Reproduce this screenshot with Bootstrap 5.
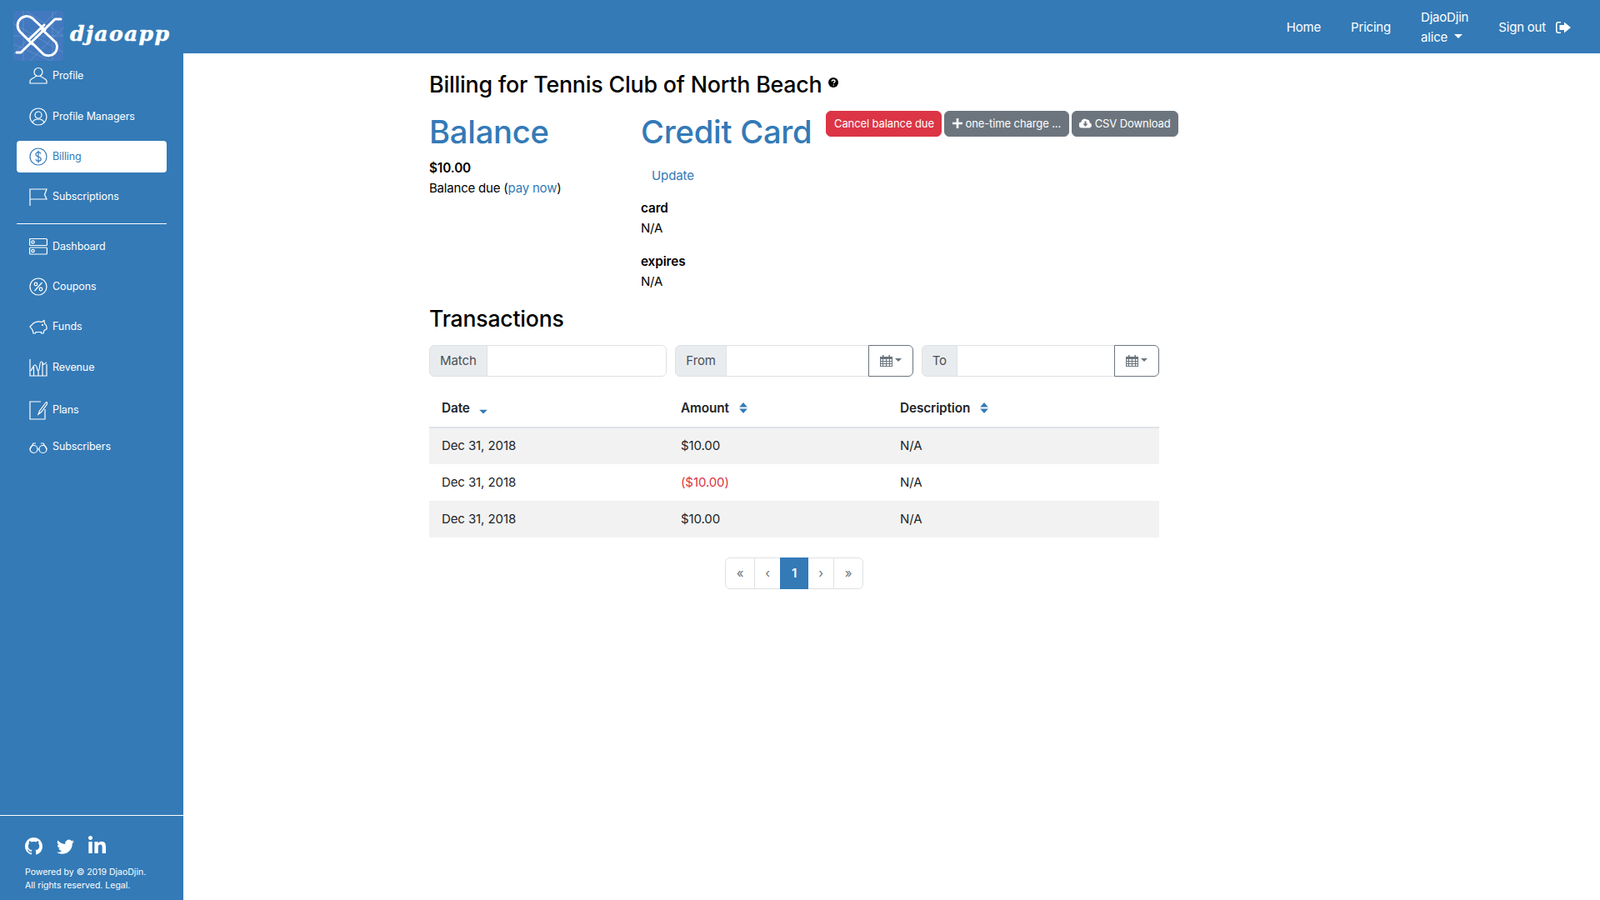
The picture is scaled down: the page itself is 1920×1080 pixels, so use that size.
<!DOCTYPE html>
<html lang="en">
<head>
<meta charset="utf-8">
<title>Billing</title>
<link href="https://cdn.jsdelivr.net/npm/bootstrap@5.3.0/dist/css/bootstrap.min.css" rel="stylesheet">
<style>
:root{--brand:#337ab7;}
html,body{height:100%;}
body{font-family:Inter,"Liberation Sans",sans-serif;font-size:15px;color:#000;overflow:hidden;letter-spacing:-.1px;}
a{color:var(--brand);text-decoration:none;}
.topbar{height:64px;background:var(--brand);padding:0;position:relative;z-index:5;align-items:flex-start;}
.logo-wrap{margin:13px 0 0 16px;gap:8px;}
.logo-box{width:60px;height:60px;border-radius:4px;background:#4279be;}
.logo-word{font-family:"DejaVu Serif",serif;font-weight:700;font-style:italic;font-size:25px;color:#fff;letter-spacing:1.4px;margin-top:-5px;-webkit-text-stroke:.5px #fff;}
.top-links{height:64px;align-items:center;gap:36px;padding:2px 34px 0 0;font-size:15px;letter-spacing:-.2px;}
.top-links a{color:#fff;line-height:24px;display:block;}
.top-links .toplink-two{line-height:24px;}
.top-links .dropdown-toggle::after{margin-left:.55em;border-top-width:.35em;border-left-width:.35em;border-right-width:.35em;}
.signout-gap{gap:11px;}
.shell{height:calc(100% - 64px);}
.side{width:220px;background:var(--brand);color:#fff;flex:none;}
.side-list{padding:8px 20px 0;display:flex;flex-direction:column;}
.side-link{height:38px;display:flex;align-items:center;gap:6px;padding-left:15px;color:#fff;font-size:12.5px;border-radius:4px;margin-bottom:10px;}
.side-link svg{width:22px;height:24px;flex:none;fill:none;stroke:currentColor;stroke-width:1.2;}
.side-link.on{background:#fff;color:var(--brand);}
.nudge-a{margin-top:1px;}
.nudge-b{margin-top:3px;}
.nudge-d{margin-top:-4px;}
.side-rule{border-top:1px solid #fff;margin:3px 0 8px;opacity:1;}
.side-foot{border-top:1px solid #fff;padding:24px 0 0 30px;height:102px;font-size:10.5px;line-height:16px;letter-spacing:0;}
.foot-icons{gap:17px;margin-bottom:12px;height:24px;align-items:center;}
.foot-icons svg{fill:#fff;display:block;}
.page-area{padding:0 0 0 295px;flex:1;min-width:0;}
.page-inner{width:876px;}
.billing-title{font-size:26.8px;font-weight:500;line-height:32px;margin:21px 0 0;letter-spacing:-.2px;}
.help-dot{width:12px;height:12px;margin-left:1px;vertical-align:6px;}
.head-row{margin-top:8px;position:relative;}
.col-balance{width:254px;flex:none;}
.col-card{flex:none;}
.blue-head{color:var(--brand);font-size:38.2px;font-weight:500;line-height:48px;margin:9px 0 0;letter-spacing:-.25px;}
.fact-label{font-weight:600;line-height:24px;font-size:15.3px;}
.fact-value{line-height:24px;letter-spacing:-.2px;}
.balance-body{margin-top:8px;}
.update-link{display:block;margin:17px 0 0 13px;line-height:24px;}
.card-facts{margin-top:15px;}
.card-facts .fact-gap{margin-top:16px;}
.action-row{gap:3px;margin:8px 0 0 17px;height:31px;white-space:nowrap;}
.action-row .btn{font-size:13px;padding:0 8.5px;height:31px;line-height:29px;letter-spacing:-.1px;}
.action-row svg{fill:#fff;vertical-align:-1px;}
.trans-head{font-size:26.6px;font-weight:500;line-height:32px;margin:16px 0 0;letter-spacing:-.2px;}
.filter-row{gap:10px;margin-top:16px;}
.filter-row .input-group{flex:1 1 0;}
.filter-row .input-group-text,.filter-row .form-control,.filter-row .btn{font-size:15px;height:38px;}
.filter-row .input-group-text{color:#495057;background:#e9ecef;}
.filter-row .btn{width:54px;padding:0;border-color:#6c757d;color:#6c757d;}
.filter-row .btn svg{fill:#6c757d;vertical-align:-2px;}
.filter-row .dropdown-toggle::after{margin-left:3px;}
.trans-table{--bs-table-striped-bg:#f2f2f2;--bs-table-striped-color:#212529;margin:17px 0 0;table-layout:fixed;font-size:15px;color:#212529;}
.trans-table th{font-weight:600;font-size:15.3px;padding:0 15px;height:44px;vertical-align:middle;border-bottom:2px solid #dee2e6;}
.trans-table td{padding:0 15px;height:44px;vertical-align:middle;border:0;}
.cw-date{width:287px;}.cw-amt{width:263px;}
.sort-mark{width:12px;height:15px;margin-left:7px;vertical-align:-2px;fill:var(--brand);}
.neg{color:#dc3545;}
.pager{margin:24px 0 0;}
.pager .page-link{height:38px;padding:0;display:flex;align-items:center;justify-content:center;color:#6c757d;font-size:15px;}
.pager .active .page-link{background:var(--brand);border-color:var(--brand);color:#fff;font-weight:600;}
.pw-a{width:36px;}.pw-b{width:32px;}.pw-c{width:34px;}.pw-d{width:32px;}
</style>
</head>
<body>
<nav class="navbar navbar-expand topbar justify-content-between">
  <a class="d-flex align-items-center logo-wrap" href="#">
    <svg class="logo-box" viewBox="0 0 60 60" aria-hidden="true">
      <g stroke="#8fb0dc" stroke-width=".6" fill="none" opacity=".6"><path d="M0 15 60 50M0 40 45 60M15 0 60 30M0 52 52 0M20 60 60 20M12 0V60M47 0V60M0 30H60"/></g>
      <g fill="none" stroke="#fff" stroke-width="3" stroke-linecap="round" stroke-linejoin="round"><path d="M23 40 8 25A11 11 0 0 1 23 9L38 23"/><path d="M33 21 51 38A10.500 10.500 0 0 1 36 52L22 38"/><path d="M4 50H9L50 10H57"/><path d="M19 34 37 17"/></g>
    </svg>
    <span class="logo-word">djaoapp</span>
  </a>
  <div class="d-flex top-links">
    <a href="#">Home</a>
    <a href="#">Pricing</a>
    <div class="toplink-two"><a href="#">DjaoDjin</a><a href="#" class="dropdown-toggle">alice</a></div>
    <a href="#" class="d-flex align-items-center signout-gap">Sign out
      <svg width="20" height="18" viewBox="0 0 20 18" fill="#fff"><path d="M7 2H4a3 3 0 0 0-3 3v8a3 3 0 0 0 3 3h3v-1.600H4A1.400 1.400 0 0 1 2.600 13V5A1.400 1.400 0 0 1 4 3.600h3z"/><path d="M11 2.500 19 9l-8 6.500V12H5.500V6H11z"/></svg>
    </a>
  </div>
</nav>
<div class="d-flex shell">
  <aside class="side d-flex flex-column justify-content-between">
    <div class="side-list">
      <a class="side-link" href="#"><svg viewBox="0 0 22 24"><circle cx="11" cy="7.500" r="5"/><path d="M8.500 12c0 2-7.500 3-7.500 6.500V21h20v-2.500C21 15 13.500 14 13.500 12"/></svg>Profile</a>
      <a class="side-link nudge-a" href="#"><svg viewBox="0 0 22 24"><circle cx="11" cy="12" r="10"/><circle cx="11" cy="10" r="4"/><path d="M4 19c1-3 4-4 7-4s6 1 7 4"/></svg>Profile Managers</a>
      <a class="side-link on" href="#"><svg viewBox="0 0 22 24"><circle cx="11" cy="12" r="10"/><path d="M14 8.500c-.5-1.300-1.500-1.800-3-1.800-1.800 0-3 1-3 2.500 0 3.500 6.200 2 6.200 5.500 0 1.500-1.300 2.600-3.200 2.600-1.600 0-2.800-.7-3.200-2M11 4.500v15"/></svg>Billing</a>
      <a class="side-link" href="#"><svg viewBox="0 0 22 24"><path d="M1 23V3H21L18.500 9.500 21 15H1"/></svg>Subscriptions</a>
      <hr class="side-rule">
      <a class="side-link" href="#"><svg viewBox="0 0 22 24"><rect x=".6" y="2.500" width="20.800" height="8" rx="1"/><rect x=".6" y="13" width="20.800" height="8" rx="1"/><circle cx="4.500" cy="6.500" r="1.700"/><circle cx="4.500" cy="17" r="1.700"/></svg>Dashboard</a>
      <a class="side-link" href="#"><svg viewBox="0 0 22 24"><circle cx="11" cy="12" r="10"/><circle cx="8" cy="9" r="1.800"/><circle cx="14" cy="15" r="1.800"/><path d="M15.500 7 6.500 17"/></svg>Coupons</a>
      <a class="side-link" href="#"><svg viewBox="0 0 22 24"><path d="M1 12 5.500 7.500C8 6 12 5.500 15 6.500L18 4.500 18.500 8.500C20 9.500 21 11 21 12.500V15L18 16.500 17 20H14.500V18.500H8L7.500 20H5L4 16Z"/><circle cx="16" cy="10" r=".5"/></svg>Funds</a>
      <a class="side-link nudge-a" href="#"><svg viewBox="0 0 22 24"><path d="M1 2V22H21V8M1 16C4 16 4 9 7 9S9 16 11 16 12 5 14.500 5 16 9 18 8 20 6 21 6M5.500 11V22M11 16V22M16 7V22"/></svg>Revenue</a>
      <a class="side-link nudge-b" href="#"><svg viewBox="0 0 22 24"><path d="M14 2H1V23H19V11M20.500 2.500 12.500 13 11 17 14.500 14.500 21.500 5C22 3.500 21.500 2.500 20.500 2.500Z"/></svg>Plans</a>
      <a class="side-link nudge-d" href="#"><svg viewBox="0 0 22 24"><circle cx="5.500" cy="15" r="4.500"/><circle cx="16.500" cy="15" r="4.500"/><path d="M10 15h2M1 15 5 8h3M21 15 17 8h-3"/></svg>Subscribers</a>
    </div>
    <div class="side-foot">
      <div class="d-flex foot-icons">
        <svg width="21" height="21" viewBox="0 0 16 16"><path d="M8 0C3.580 0 0 3.580 0 8c0 3.540 2.290 6.530 5.470 7.590.4.07.55-.17.55-.38 0-.19-.01-.82-.01-1.490-2.010.37-2.530-.49-2.690-.94-.09-.23-.48-.94-.82-1.130-.28-.15-.68-.52-.01-.53.63-.01 1.080.58 1.230.82.72 1.210 1.870.87 2.330.66.07-.52.28-.87.51-1.070-1.780-.2-3.640-.89-3.640-3.950 0-.87.31-1.590.82-2.150-.08-.2-.36-1.020.08-2.120 0 0 .67-.21 2.200.82.64-.18 1.320-.27 2-.27.68 0 1.360.09 2 .27 1.530-1.040 2.200-.82 2.200-.82.44 1.100.16 1.920.08 2.120.51.56.82 1.270.82 2.150 0 3.070-1.870 3.750-3.650 3.950.29.25.54.73.54 1.480 0 1.070-.01 1.930-.01 2.200 0 .21.15.46.55.38A8.012 8.012 0 0 0 16 8c0-4.420-3.580-8-8-8z"/></svg>
        <svg width="21" height="21" viewBox="0 0 16 16"><path d="M5.026 15c6.038 0 9.341-5.003 9.341-9.334 0-.14 0-.282-.006-.422A6.685 6.685 0 0 0 16 3.542a6.658 6.658 0 0 1-1.889.518 3.301 3.301 0 0 0 1.447-1.817 6.533 6.533 0 0 1-2.087.793A3.286 3.286 0 0 0 7.875 6.030a9.325 9.325 0 0 1-6.767-3.429 3.289 3.289 0 0 0 1.018 4.382A3.323 3.323 0 0 1 .64 6.575v.045a3.288 3.288 0 0 0 2.632 3.218 3.203 3.203 0 0 1-.865.115 3.230 3.230 0 0 1-.614-.057 3.283 3.283 0 0 0 3.067 2.277A6.588 6.588 0 0 1 .78 13.580a6.320 6.320 0 0 1-.78-.045A9.344 9.344 0 0 0 5.026 15z"/></svg>
        <svg width="21" height="24" viewBox="0 0 448 512"><path d="M100.280 448H7.400V148.900h92.880zM53.790 108.100C24.090 108.100 0 83.500 0 53.800a53.790 53.790 0 0 1 107.580 0c0 29.700-24.100 54.300-53.790 54.300zM447.900 448h-92.680V302.400c0-34.700-.7-79.200-48.290-79.200-48.290 0-55.690 37.700-55.690 76.700V448h-92.780V148.900h89.080v40.800h1.300c12.400-23.500 42.690-48.300 87.880-48.300 94 0 111.280 61.900 111.280 142.300V448z"/></svg>
      </div>
      <div>Powered by © 2019 DjaoDjin.</div>
      <div>All rights reserved. Legal.</div>
    </div>
  </aside>
  <main class="page-area">
    <div class="page-inner">
      <h1 class="billing-title">Billing for Tennis Club of North Beach <svg class="help-dot" viewBox="0 0 12 12"><circle cx="6" cy="6" r="6" fill="#000"/><path d="M4 4.600C4.100 3.500 5 3 6 3c1.200 0 2 .7 2 1.600 0 1.300-1.700 1.300-1.700 2.500" fill="none" stroke="#fff" stroke-width="1.300"/><circle cx="6.200" cy="9" r=".8" fill="#fff"/></svg></h1>
      <div class="d-flex head-row">
        <div class="col-balance">
          <h2 class="blue-head">Balance</h2>
          <div class="balance-body">
            <div class="fact-label">$10.00</div>
            <div class="fact-value">Balance due (<a href="#">pay now</a>)</div>
          </div>
        </div>
        <div class="col-card">
          <h2 class="blue-head">Credit Card</h2>
          <a class="update-link" href="#">Update</a>
          <div class="card-facts">
            <div class="fact-label">card</div>
            <div class="fact-value">N/A</div>
            <div class="fact-label fact-gap">expires</div>
            <div class="fact-value">N/A</div>
          </div>
        </div>
        <div class="d-flex action-row">
          <a class="btn btn-danger" href="#">Cancel balance due</a>
          <a class="btn btn-secondary" href="#"><svg width="12" height="12" viewBox="0 0 12 12"><path d="M4.700 0h2.600v4.700H12v2.600H7.300V12H4.700V7.300H0V4.700h4.700z"/></svg> one-time charge ...</a>
          <a class="btn btn-secondary" href="#"><svg width="15" height="12" viewBox="0 0 15 12"><path d="M12.500 5.200A3 3 0 0 0 9 1.500 4 4 0 0 0 2.500 4.500 3.500 3.500 0 0 0 3.500 11.500H12A3.200 3.200 0 0 0 12.500 5.200ZM7.500 10 4.500 6.500H6.500V3.500H8.500V6.500H10.500Z"/></svg> CSV Download</a>
        </div>
      </div>
      <h3 class="trans-head">Transactions</h3>
      <div class="d-flex filter-row">
        <div class="input-group"><span class="input-group-text">Match</span><input class="form-control" type="text" aria-label="Match"></div>
        <div class="input-group"><span class="input-group-text">From</span><input class="form-control" type="text" aria-label="From"><button class="btn btn-outline-secondary dropdown-toggle" type="button"><svg width="15" height="14" viewBox="0 0 15 14"><path d="M0 2h3V0h1.500v2h6V0H12v2h3v12H0zM1 5v2h2V5zm3 0v2h3V5zm4 0v2h3V5zm4 0v2h2V5zM1 8v2h2V8zm3 0v2h3V8zm4 0v2h3V8zm4 0v2h2V8zM1 11v2h2v-2zm3 0v2h3v-2zm4 0v2h3v-2zm4 0v2h2v-2z"/></svg></button></div>
        <div class="input-group"><span class="input-group-text">To</span><input class="form-control" type="text" aria-label="To"><button class="btn btn-outline-secondary dropdown-toggle" type="button"><svg width="15" height="14" viewBox="0 0 15 14"><path d="M0 2h3V0h1.500v2h6V0H12v2h3v12H0zM1 5v2h2V5zm3 0v2h3V5zm4 0v2h3V5zm4 0v2h2V5zM1 8v2h2V8zm3 0v2h3V8zm4 0v2h3V8zm4 0v2h2V8zM1 11v2h2v-2zm3 0v2h3v-2zm4 0v2h3v-2zm4 0v2h2v-2z"/></svg></button></div>
      </div>
      <table class="table table-striped trans-table">
        <thead><tr>
          <th class="cw-date">Date <svg class="sort-mark" viewBox="0 0 10 14"><path d="M.5 9h9L5 13.500z"/></svg></th>
          <th class="cw-amt">Amount <svg class="sort-mark" viewBox="0 0 10 14"><path d="M.5 6 5 1l4.500 5zM.5 8h9L5 13z"/></svg></th>
          <th>Description <svg class="sort-mark" viewBox="0 0 10 14"><path d="M.5 6 5 1l4.500 5zM.5 8h9L5 13z"/></svg></th>
        </tr></thead>
        <tbody>
          <tr><td>Dec 31, 2018</td><td>$10.00</td><td>N/A</td></tr>
          <tr><td>Dec 31, 2018</td><td class="neg">($10.00)</td><td>N/A</td></tr>
          <tr><td>Dec 31, 2018</td><td>$10.00</td><td>N/A</td></tr>
        </tbody>
      </table>
      <ul class="pagination justify-content-center pager">
        <li class="page-item"><a class="page-link pw-a" href="#">«</a></li>
        <li class="page-item"><a class="page-link pw-b" href="#">‹</a></li>
        <li class="page-item active"><a class="page-link pw-c" href="#">1</a></li>
        <li class="page-item"><a class="page-link pw-d" href="#">›</a></li>
        <li class="page-item"><a class="page-link pw-a" href="#">»</a></li>
      </ul>
    </div>
  </main>
</div>
<script src="https://cdn.jsdelivr.net/npm/bootstrap@5.3.0/dist/js/bootstrap.bundle.min.js"></script>
</body>
</html>
